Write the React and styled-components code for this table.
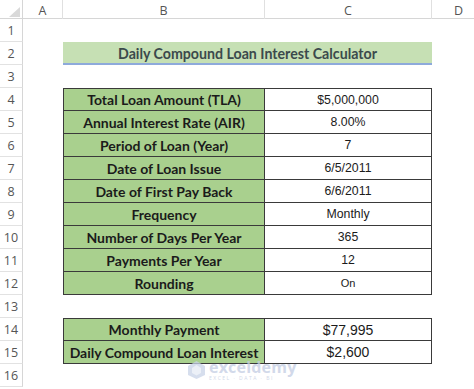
import React from "react";
import styled, { createGlobalStyle } from "styled-components";

const Global = createGlobalStyle`
  html, body { margin: 0; padding: 0; background: #fff; }
  body { width: 474px; height: 389px; overflow: hidden; font-family: "Lato", "Liberation Sans", sans-serif; }
`;

const COLS = "23px 40px 202px 167px 54px";

const Sheet = styled.div`
  position: relative;
  width: 474px;
  height: 389px;
  overflow: hidden;
  display: flex;
  flex-direction: column;
`;

const HeaderRow = styled.div`
  display: grid;
  grid-template-columns: ${COLS};
  height: 19px;
  border-bottom: 1px solid #d6d6d6;
  box-sizing: border-box;
  flex: none;
`;

const Corner = styled.div`
  position: relative;
  border-right: 1px solid #d6d6d6;
  svg { position: absolute; right: 2px; bottom: 2px; }
`;

const ColHead = styled.div`
  display: flex;
  align-items: center;
  justify-content: center;
  border-right: 1px solid #e0e0e0;
  color: #555;
  font-family: "Open Sans", "Liberation Sans", sans-serif;
  font-size: 12.5px;
  padding-top: 2px;
`;

const Row = styled.div`
  display: grid;
  grid-template-columns: ${COLS};
  height: 23px;
  flex: none;
`;

const RowNum = styled.div`
  display: flex;
  align-items: flex-end;
  justify-content: center;
  padding-bottom: 2px;
  box-sizing: border-box;
  border-right: 1px solid #d6d6d6;
  border-bottom: 1px solid #e2e2e2;
  color: #555;
  font-family: "Open Sans", "Liberation Sans", sans-serif;
  font-size: 12.5px;
`;

const Blank = styled.div``;

const Title = styled.div`
  grid-column: 3 / span 2;
  background: #c6e0b4;
  border-bottom: 2px solid #8eaadb;
  box-sizing: border-box;
  display: flex;
  align-items: center;
  justify-content: center;
  font-weight: 700;
  font-size: 14.2px;
  color: #3b4a4c;
  padding-top: 1px;
`;

const Label = styled.div`
  background: #a9d08e;
  border: 1px solid #3a3a3a;
  border-top-width: ${(p) => (p.$first ? "1px" : "0")};
  box-sizing: border-box;
  display: flex;
  align-items: center;
  justify-content: center;
  font-weight: 700;
  font-size: 14px;
  color: #1b1b1b;
  white-space: nowrap;
`;

const Value = styled.div`
  background: #fff;
  border: 1px solid #3a3a3a;
  border-left: 0;
  border-top-width: ${(p) => (p.$first ? "1px" : "0")};
  box-sizing: border-box;
  display: flex;
  align-items: center;
  justify-content: center;
  font-family: "Liberation Sans", Arial, sans-serif;
  font-size: ${(p) => p.$size || 12.3}px;
  color: #1b1b1b;
`;

const Watermark = styled.div`
  position: absolute;
  left: 187px;
  top: 359px;
  display: flex;
  align-items: center;
  gap: 3px;
  opacity: 0.75;
  pointer-events: none;
`;

const WmText = styled.div`
  display: flex;
  flex-direction: column;
  line-height: 1;
`;

const WmBig = styled.span`
  font-family: "Open Sans", sans-serif;
  font-weight: 700;
  font-size: 16px;
  color: #c3cde3;
  letter-spacing: 0.2px;
`;

const WmSmall = styled.span`
  font-family: "Open Sans", sans-serif;
  font-size: 5px;
  color: #c3cde3;
  letter-spacing: 1.5px;
  margin-top: 1px;
`;

const table1 = [
  ["Total Loan Amount (TLA)", "$5,000,000"],
  ["Annual Interest Rate (AIR)", "8.00%"],
  ["Period of Loan (Year)", "7"],
  ["Date of Loan Issue", "6/5/2011"],
  ["Date of First Pay Back", "6/6/2011"],
  ["Frequency", "Monthly"],
  ["Number of Days Per Year", "365"],
  ["Payments Per Year", "12"],
  ["Rounding", "On", 11],
];

const table2 = [
  ["Monthly Payment", "$77,995", 14],
  ["Daily Compound Loan Interest", "$2,600", 14],
];

function DataRow({ n, label, value, size, first }) {
  return (
    <Row>
      <RowNum>{n}</RowNum>
      <Blank />
      <Label $first={first}>{label}</Label>
      <Value $first={first} $size={size}>{value}</Value>
      <Blank />
    </Row>
  );
}

function EmptyRow({ n }) {
  return (
    <Row>
      <RowNum>{n}</RowNum>
    </Row>
  );
}

export default function App() {
  return (
    <>
      <Global />
      <Sheet>
        <HeaderRow>
          <Corner>
            <svg width="11" height="10" viewBox="0 0 11 10">
              <polygon points="11,0 11,10 0,10" fill="#d9d9d9" />
            </svg>
          </Corner>
          <ColHead>A</ColHead>
          <ColHead>B</ColHead>
          <ColHead>C</ColHead>
          <ColHead>D</ColHead>
        </HeaderRow>
        <EmptyRow n={1} />
        <Row>
          <RowNum>2</RowNum>
          <Blank />
          <Title>Daily Compound Loan Interest Calculator</Title>
        </Row>
        <EmptyRow n={3} />
        {table1.map(([l, v, s], i) => (
          <DataRow key={l} n={4 + i} label={l} value={v} size={s} first={i === 0} />
        ))}
        <EmptyRow n={13} />
        {table2.map(([l, v, s], i) => (
          <DataRow key={l} n={14 + i} label={l} value={v} size={s} first={i === 0} />
        ))}
        <EmptyRow n={16} />
        <Watermark>
          <svg width="19" height="20" viewBox="0 0 19 20">
            <polygon points="9.5,1 18,6 18,15 9.5,19 1,15 1,6" fill="#c9d3e8" />
            <polygon points="9.5,5 14,8 14,13 9.5,15.5 5,13 5,8" fill="#e6ebf5" />
          </svg>
          <WmText>
            <WmBig>exceldemy</WmBig>
            <WmSmall>EXCEL · DATA · BI</WmSmall>
          </WmText>
        </Watermark>
      </Sheet>
    </>
  );
}
